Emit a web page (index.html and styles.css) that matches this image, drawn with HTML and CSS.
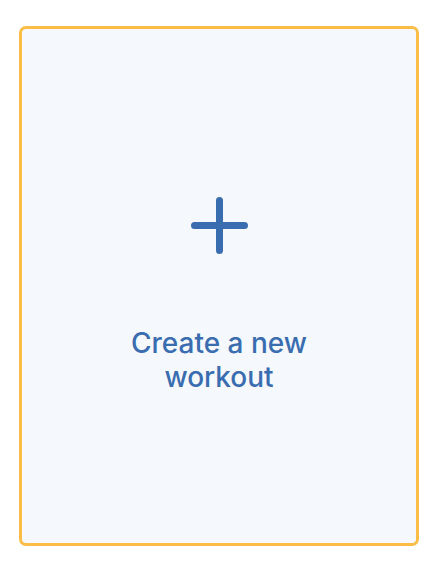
FILE: index.html
```html
<!DOCTYPE html>
<html>
<head>
<meta charset="utf-8">
<link rel="stylesheet" href="styles.css">
</head>
<body>
<div class="page">
  <div class="card">
    <svg class="plus" width="57" height="57" viewBox="0 0 57 57">
      <path d="M28.5 3.5V53.5M3.5 28.5H53.5" stroke="#3A6DB0" stroke-width="7" stroke-linecap="round" fill="none"/>
    </svg>
    <div class="label">Create a new<br>workout</div>
  </div>
</div>
</body>
</html>
```
FILE: styles.css
```css
html, body {
  margin: 0;
  padding: 0;
  background: #ffffff;
}
.page {
  width: 438px;
  height: 573px;
  padding-top: 26px;
  box-sizing: border-box;
  display: flex;
  justify-content: center;
  align-items: flex-start;
}
.card {
  width: 400px;
  height: 520px;
  box-sizing: border-box;
  border: 3px solid #FBBD45;
  border-radius: 7px;
  background: #F5F8FD;
  display: flex;
  flex-direction: column;
  align-items: center;
  padding-top: 168px;
}
.plus {
  display: block;
}
.label {
  margin-top: 72px;
  font-family: Inter, "Noto Sans", sans-serif;
  font-size: 28px;
  font-weight: 450;
  line-height: 34px;
  color: #3A6DB0;
  text-align: center;
}
```
